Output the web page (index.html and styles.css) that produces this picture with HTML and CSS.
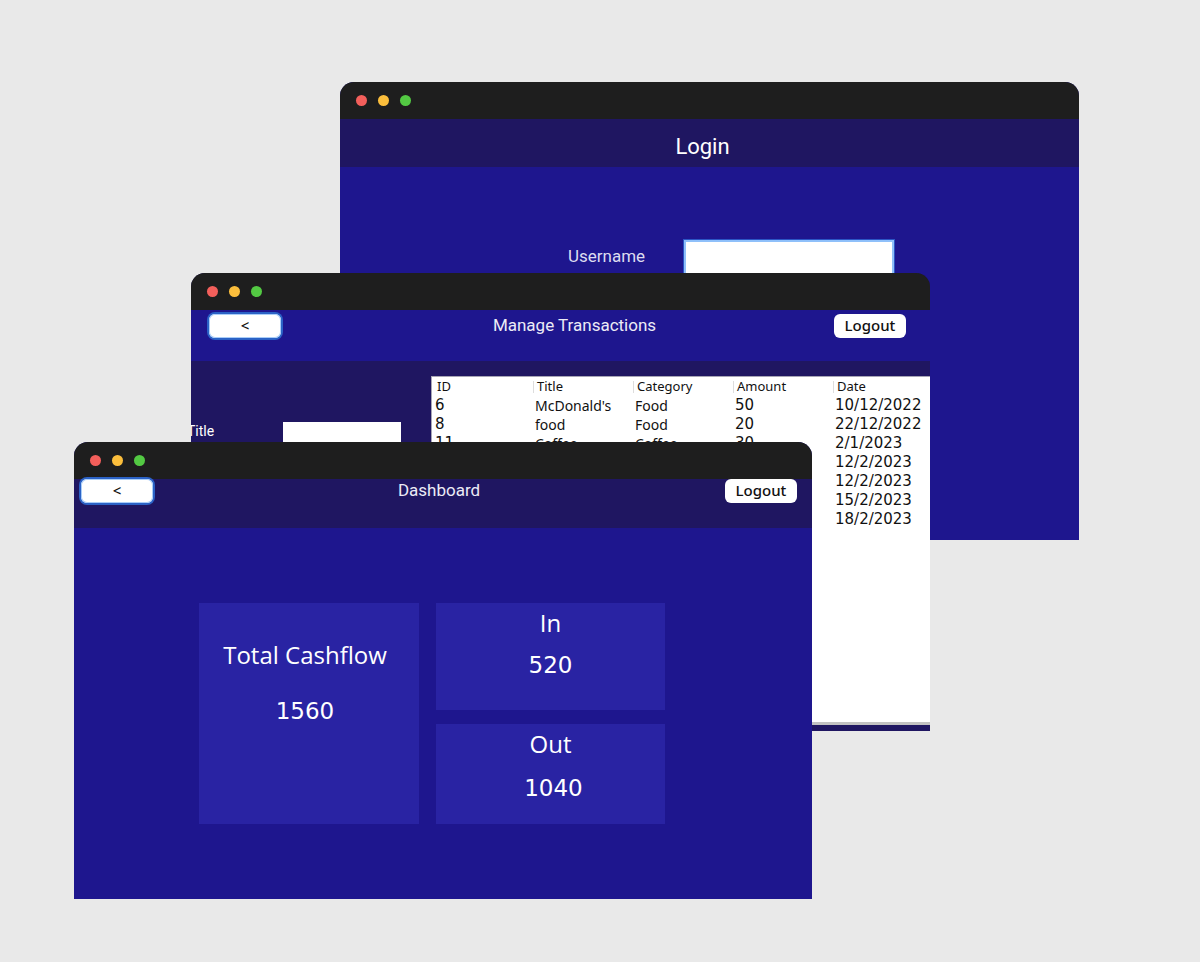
FILE: index.html
```html
<!DOCTYPE html>
<html lang="en">
<head>
<meta charset="utf-8">
<meta name="viewport" content="width=device-width, initial-scale=1">
<title>Cashflow</title>
<link rel="stylesheet" href="styles.css">
</head>
<body>
<main class="desktop">
  <section class="window window-login">
    <div class="titlebar"><i class="dot red"></i><i class="dot yellow"></i><i class="dot green"></i></div>
    <header class="login-header"><h1 class="login-title">Login</h1></header>
    <form class="login-form">
      <label class="login-label" for="username">Username</label>
      <input class="login-input" id="username" type="text">
    </form>
  </section>

  <section class="window window-manage">
    <div class="titlebar"><i class="dot red"></i><i class="dot yellow"></i><i class="dot green"></i></div>
    <header class="toolbar manage-toolbar">
      <button class="btn btn-back" type="button">&lt;</button>
      <h2 class="toolbar-title">Manage Transactions</h2>
      <button class="btn" type="button">Logout</button>
    </header>
    <div class="manage-body">
      <form class="entry-form">
        <label class="entry-label" for="entry-title">Title</label>
        <input class="entry-input" id="entry-title" type="text">
      </form>
      <div class="table-pane">
        <table class="records">
          <thead>
            <tr><th>ID</th><th>Title</th><th>Category</th><th>Amount</th><th>Date</th></tr>
          </thead>
          <tbody>
            <tr><td>6</td><td>McDonald's</td><td>Food</td><td>50</td><td>10/12/2022</td></tr>
            <tr><td>8</td><td>food</td><td>Food</td><td>20</td><td>22/12/2022</td></tr>
            <tr><td>11</td><td>Coffee</td><td>Coffee</td><td>30</td><td>2/1/2023</td></tr>
            <tr><td></td><td></td><td></td><td></td><td>12/2/2023</td></tr>
            <tr><td></td><td></td><td></td><td></td><td>12/2/2023</td></tr>
            <tr><td></td><td></td><td></td><td></td><td>15/2/2023</td></tr>
            <tr><td></td><td></td><td></td><td></td><td>18/2/2023</td></tr>
          </tbody>
        </table>
      </div>
    </div>
  </section>

  <section class="window window-dashboard">
    <div class="titlebar"><i class="dot red"></i><i class="dot yellow"></i><i class="dot green"></i></div>
    <header class="toolbar dashboard-toolbar">
      <button class="btn btn-back" type="button">&lt;</button>
      <h2 class="toolbar-title">Dashboard</h2>
      <button class="btn" type="button">Logout</button>
    </header>
    <div class="cards">
      <article class="card card-total"><h3 class="card-name">Total Cashflow</h3><p class="card-value">1560</p></article>
      <article class="card card-in"><h3 class="card-name">In</h3><p class="card-value">520</p></article>
      <article class="card card-out"><h3 class="card-name">Out</h3><p class="card-value">1040</p></article>
    </div>
  </section>
</main>
</body>
</html>
```
FILE: styles.css
```css
* { box-sizing: border-box; }

body {
  margin: 0;
  background: #e9e9e9;
  font-family: "Open Sans", "Noto Sans", sans-serif;
}

h1, h2, h3, p { margin: 0; font-weight: 400; }

.desktop { position: relative; min-height: 100vh; overflow: hidden; }

/* Overlapping windows on the desktop */
.window {
  position: absolute;
  display: flex;
  flex-direction: column;
  width: 739px;
  height: 458px;
  overflow: hidden;
  border-radius: 14px 14px 0 0;
  background: #1e168e;
  color: #fff;
}
.window-login { left: 340px; top: 82px; }
.window-manage { left: 191px; top: 273px; background: #1f1661; }
.window-dashboard { left: 74px; top: 442px; width: 738px; height: 457px; }

.titlebar {
  display: flex;
  flex: none;
  align-items: center;
  gap: 11px;
  height: 37px;
  padding-left: 16px;
  background: #1e1e1e;
}
.dot { width: 11px; height: 11px; border-radius: 50%; }
.red { background: #f35f5b; }
.yellow { background: #fbbe3c; }
.green { background: #53c943; }

/* Login */
.login-header {
  height: 48px;
  padding: 12px 14px 0 0;
  background: #1f1661;
  text-align: center;
}
.login-title { font: 22px/32px Roboto, Inter, sans-serif; }
.login-form {
  display: flex;
  align-items: flex-start;
  justify-content: space-between;
  padding: 73px 185px 0 228px;
}
.login-label { padding-top: 4px; font: 17px/24px Roboto, Inter, sans-serif; color: #dddcf0; }
.login-input {
  width: 210px;
  height: 40px;
  border: 2px solid #8fc0fa;
  outline: 1px solid #2b55c4;
  background: #fff;
}

/* Toolbars */
.toolbar { display: flex; flex: none; align-items: flex-start; justify-content: space-between; }
.toolbar-title { font: 17px/22px Roboto, Inter, sans-serif; color: #ecebf6; }
.manage-toolbar { height: 51px; padding: 4px 24px 0 18px; background: #1e168e; }
.manage-toolbar .toolbar-title { padding-left: 34px; }
.dashboard-toolbar { height: 49px; padding: 0 15px 0 7px; background: #1f1661; }

.btn {
  width: 72px;
  height: 24px;
  padding: 0 0 2px;
  border: 0;
  border-radius: 6px;
  background: #fff;
  color: #111;
  font: 500 15px/22px "Noto Sans", "Open Sans", sans-serif;
}
.btn-back { box-shadow: inset 0 0 0 1px #a9cdf8, 0 0 0 2px #2b62c6; }

/* Manage transactions */
.manage-body { display: flex; flex: 1; align-items: flex-start; padding-top: 15px; }
.entry-form {
  display: flex;
  flex: none;
  width: 240px;
  padding: 46px 30px 0 0;
  justify-content: space-between;
}
.entry-label { margin-left: -4px; font: 14px/18px Roboto, Inter, sans-serif; }
.entry-input { width: 118px; height: 28px; border: 0; background: #fff; }
.table-pane {
  flex: 1;
  height: 349px;
  overflow: hidden;
  border: 1px solid #a7a5b5;
  border-right: 0;
  border-bottom: 3px solid #c2c2c2;
  background: #fff;
  color: #111;
}
.records { width: 501px; table-layout: fixed; border-collapse: collapse; }
.records th {
  width: 100px;
  height: 19px;
  padding: 0 0 2px 4px;
  font: 400 13px/16px "Noto Sans", sans-serif;
  text-align: left;
  background: linear-gradient(#ddd, #ddd) 0 4px / 1px 12px no-repeat;
}
.records th:first-child { width: 101px; padding-left: 5px; background: none; }
.records td {
  height: 19px;
  padding: 0 0 0 2px;
  font: 14px/19px "Noto Sans", sans-serif;
  white-space: nowrap;
}
.records td:first-child { padding-left: 3px; }
.records td:first-child, .records td:nth-child(n + 4) { font: 15px/19px "DejaVu Sans", sans-serif; }

/* Dashboard */
.cards {
  display: grid;
  grid-template: 107px 100px / 220px 229px;
  gap: 14px 17px;
  padding: 75px 0 0 125px;
}
.card {
  display: flex;
  flex-direction: column;
  gap: 10px;
  padding-top: 4px;
  background: #2923a3;
  text-align: center;
}
.card-name { font-size: 24px; line-height: 32px; }
.card-value { font: 23px/32px "DejaVu Sans", sans-serif; }
.card-total { grid-row: 1 / 3; gap: 24px; padding: 36px 8px 0 0; }
.card-out { gap: 12px; }
.card-out .card-value { padding-left: 6px; }
```
